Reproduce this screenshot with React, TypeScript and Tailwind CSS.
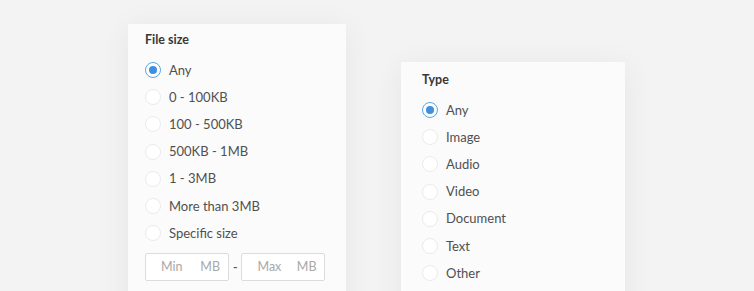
import React from "react";

function Radio({ checked }: { checked?: boolean }) {
  return checked ? (
    <span className="flex h-[16px] w-[16px] items-center justify-center rounded-full border-[1.5px] border-[#5aa6e6] bg-white">
      <span className="h-[8px] w-[8px] rounded-full bg-[#3d8fe0]" />
    </span>
  ) : (
    <span className="h-[16px] w-[16px] rounded-full border border-[#ebebeb] bg-white" />
  );
}

function Option({ label, checked }: { label: string; checked?: boolean }) {
  return (
    <div className="flex h-[27.2px] items-center gap-[8px]">
      <Radio checked={checked} />
      <span className="text-[13px] leading-none text-[#505050]">{label}</span>
    </div>
  );
}

export default function App() {
  const sizes = ["0 - 100KB", "100 - 500KB", "500KB - 1MB", "1 - 3MB", "More than 3MB", "Specific size"];
  const types = ["Image", "Audio", "Video", "Document", "Text", "Other"];
  return (
    <div
      className="flex h-[291px] w-full overflow-hidden bg-[#f3f3f3]"
      style={{ fontFamily: "Lato, 'Open Sans', sans-serif" }}
    >
      <div className="ml-[128px] mt-[24px] h-[300px] w-[218px] shrink-0 bg-[#fbfbfc] pl-[17px] pt-[8px] shadow-[0_4px_30px_rgba(0,0,0,0.06)]">
        <div className="h-[16px] text-[12.5px] font-bold leading-[16px] text-[#383838]">File size</div>
        <div className="mt-[8.5px] flex flex-col">
          <Option label="Any" checked />
          {sizes.map((s) => (
            <Option key={s} label={s} />
          ))}
        </div>
        <div className="mt-[6.5px] flex items-center">
          <div className="flex h-[28px] w-[84px] items-center justify-between rounded-[2px] border border-[#dcdcdc] bg-white pl-[15px] pr-[8px] text-[12.5px] text-[#a8a8a8]">
            <span>Min</span>
            <span>MB</span>
          </div>
          <span className="mx-[4px] text-[12px] font-bold text-[#555]">-</span>
          <div className="flex h-[28px] w-[84px] items-center justify-between rounded-[2px] border border-[#dcdcdc] bg-white pl-[15px] pr-[8px] text-[12.5px] text-[#a8a8a8]">
            <span>Max</span>
            <span>MB</span>
          </div>
        </div>
      </div>
      <div className="ml-[55px] mt-[62px] h-[300px] w-[224px] shrink-0 bg-[#fbfbfc] pl-[21px] pt-[10px] shadow-[0_4px_30px_rgba(0,0,0,0.06)]">
        <div className="h-[16px] text-[12.5px] font-bold leading-[16px] text-[#383838]">Type</div>
        <div className="mt-[8.5px] flex flex-col">
          <Option label="Any" checked />
          {types.map((s) => (
            <Option key={s} label={s} />
          ))}
        </div>
      </div>
    </div>
  );
}
